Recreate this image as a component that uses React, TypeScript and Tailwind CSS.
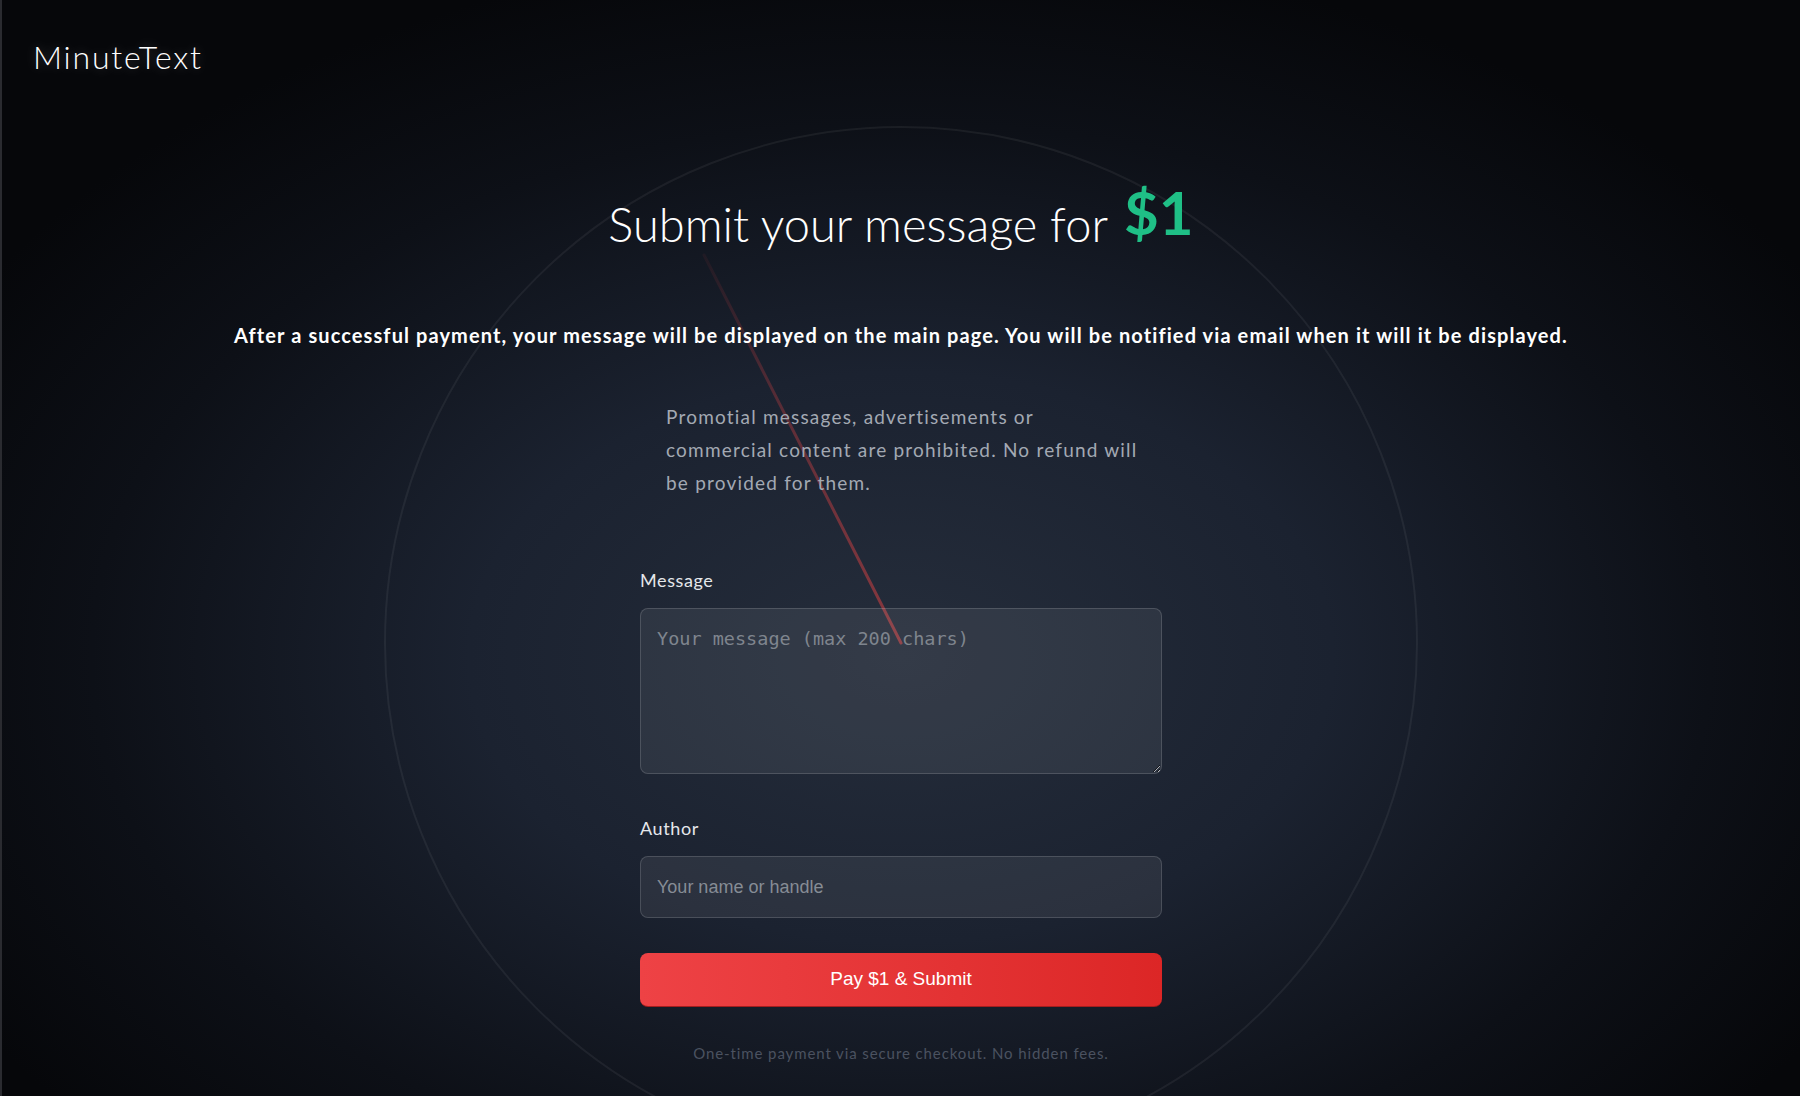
import React from 'react';

const sans = "font-['Lato','Noto_Sans',sans-serif]";

function ClockFace() {
  return (
    <svg
      className="pointer-events-none absolute left-1/2 top-[125px] h-[1036px] w-[1036px] -translate-x-1/2"
      viewBox="0 0 1036 1036"
      fill="none"
    >
      <defs>
        <linearGradient id="hand" x1="518" y1="518" x2="321" y2="130" gradientUnits="userSpaceOnUse">
          <stop offset="0" stopColor="#ef4444" stopOpacity="0.5" />
          <stop offset="0.55" stopColor="#ef4444" stopOpacity="0.32" />
          <stop offset="1" stopColor="#ef4444" stopOpacity="0.06" />
        </linearGradient>
      </defs>
      <circle cx="518" cy="518" r="516" stroke="#ffffff" strokeOpacity="0.06" strokeWidth="2" />
      <line x1="518" y1="518" x2="321" y2="130" stroke="url(#hand)" strokeWidth="3" strokeLinecap="round" />
    </svg>
  );
}

export default function App() {
  return (
    <div
      className={`relative h-[1096px] w-full overflow-hidden border-l-2 border-[#2a2b30] bg-[radial-gradient(ellipse_60%_65%_at_50%_60%,#252d3b_0%,#1b2230_40%,#0d1017_75%,#06070a_100%)] text-white ${sans}`}
    >
      <ClockFace />

      <header className="relative px-[31px] pt-[41px]">
        <div className="text-[32px] font-light leading-[32px] tracking-[1.8px] text-white [text-shadow:0_0_12px_rgba(255,255,255,0.25)]">
          MinuteText
        </div>
      </header>

      <main className="relative flex flex-col items-center">
        <h1 className="mt-[116px] flex items-baseline gap-4 leading-none">
          <span className="text-[47px] font-light text-white">Submit your message for</span>
          <span className="relative -top-[7px] text-[60px] font-bold text-[#1fbf86]">$1</span>
        </h1>

        <p className="mt-[71px] text-[20px] font-bold tracking-[1.1px] text-white">
          After a successful payment, your message will be displayed on the main page. You will be notified via email when it will it be displayed.
        </p>

        <div className="mt-[50px] w-[522px]">
          <p className="whitespace-nowrap pl-[26px] text-[19px] leading-[33px] tracking-[1.2px] text-[#a3a9b3]">
            Promotial messages, advertisements or
            <br />
            commercial content are prohibited. No refund will
            <br />
            be provided for them.
          </p>

          <label className="mt-[68px] block text-[18px] tracking-[0.6px] text-[#e5e7eb]">Message</label>
          <textarea
            className="mt-[14px] block h-[166px] w-full resize-y rounded-lg border border-white/15 bg-white/[0.07] px-4 py-[16px] font-['DejaVu_Sans_Mono',monospace] text-[18.5px] text-white placeholder:text-[#7f858e] focus:outline-none"
            placeholder="Your message (max 200 chars)"
          />

          <label className="mt-[41px] block text-[18px] tracking-[0.6px] text-[#e5e7eb]">Author</label>
          <input
            className="mt-[14px] block h-[62px] w-full rounded-lg border border-white/15 bg-white/[0.07] px-4 font-['Liberation_Sans',Arial,sans-serif] text-[18px] text-white placeholder:text-[#868c95] focus:outline-none"
            placeholder="Your name or handle"
          />

          <button className="mt-[35px] flex h-[54px] w-full items-center justify-center rounded-lg border-b border-[#a51d1d] bg-gradient-to-r from-[#ee4245] to-[#dc2626] font-['Liberation_Sans',Arial,sans-serif] text-[19px] text-white">
            Pay $1 &amp; Submit
          </button>

          <p className="mt-[35px] text-center text-[15px] tracking-[0.9px] text-[#4b5260]">
            One-time payment via secure checkout. No hidden fees.
          </p>
        </div>
      </main>
    </div>
  );
}
